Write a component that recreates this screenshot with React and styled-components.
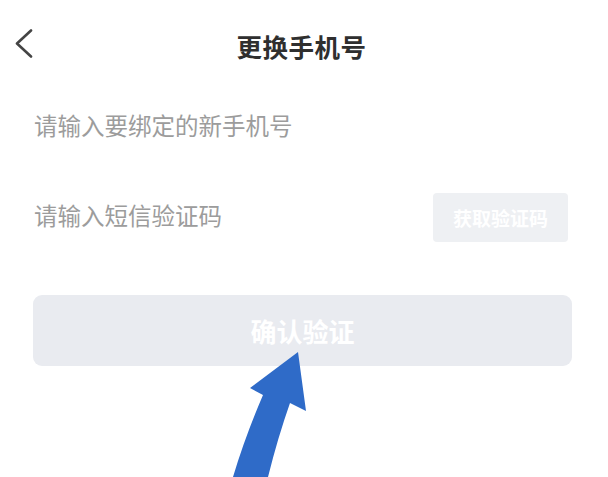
import React from "react";
import styled, { createGlobalStyle } from "styled-components";

const GlobalStyles = createGlobalStyle`
  html, body {
    margin: 0;
    padding: 0;
    background: #ffffff;
  }
  body {
    font-family: "Noto Sans CJK SC", "Noto Sans", sans-serif;
  }
  * {
    box-sizing: border-box;
  }
`;

const fields = [
  { id: "phone", placeholder: "请输入要绑定的新手机号" },
  { id: "code", placeholder: "请输入短信验证码", withCode: true },
];

const App = () => {
  return (
    <Page>
      <GlobalStyles />
      <Header>
        <BackButton aria-label="返回">
          <svg width="18" height="30" viewBox="0 0 18 30" fill="none">
            <path
              d="M16 1.5 L2 14.5 L16 27.5"
              stroke="#444"
              strokeWidth="2.6"
              strokeLinecap="round"
              strokeLinejoin="round"
            />
          </svg>
        </BackButton>
        <Title>更换手机号</Title>
        <span />
      </Header>

      <Form>
        {fields.map((f) => (
          <FieldRow key={f.id}>
            <Input placeholder={f.placeholder} />
            {f.withCode && <CodeButton>获取验证码</CodeButton>}
          </FieldRow>
        ))}
        <SubmitButton>确认验证</SubmitButton>
      </Form>

      {/* pointer drawn over the submit button */}
      <Pointer width="90" height="130" viewBox="0 0 90 130">
        <path
          d="M75 5 L83 64 L67 56 Q55 90 45 130 L10 130 Q22 90 40 48 L27 41 Z"
          fill="#2f6bc8"
        />
      </Pointer>
    </Page>
  );
};

const Page = styled.div`
  position: relative;
  width: 608px;
  height: 477px;
  overflow: hidden;
  background: #fff;
`;

const Header = styled.div`
  height: 90px;
  display: grid;
  grid-template-columns: 1fr auto 1fr;
  align-items: center;
  padding: 0 20px 0 15px;
`;

const BackButton = styled.button`
  justify-self: start;
  display: flex;
  align-items: center;
  padding: 0;
  margin-top: -3px;
  border: none;
  background: none;
  cursor: pointer;
`;

const Title = styled.h1`
  margin: 0;
  font-size: 25.5px;
  font-weight: 700;
  letter-spacing: 0.5px;
  color: #2f2f2f;
`;

const Form = styled.div`
  display: flex;
  flex-direction: column;
  padding: 10px 36px 0 33px;
`;

const FieldRow = styled.div`
  height: 50px;
  display: flex;
  align-items: center;
  justify-content: space-between;
  padding-right: 4px;

  & + & {
    margin-top: 40px;
  }
`;

const Input = styled.input`
  flex: 1;
  min-width: 0;
  border: none;
  outline: none;
  padding: 0 0 0 1px;
  font-family: inherit;
  font-size: 23.5px;
  color: #333;
  background: transparent;

  &::placeholder {
    color: #9c9c9c;
  }
`;

const CodeButton = styled.button`
  width: 135px;
  height: 49px;
  margin-top: 4px;
  border: none;
  border-radius: 4px;
  background: #eef0f3;
  color: #ffffff;
  font-family: inherit;
  font-size: 19px;
  font-weight: 700;
  cursor: pointer;
`;

const SubmitButton = styled.button`
  margin-top: 55px;
  height: 71px;
  border: none;
  border-radius: 9px;
  background: #e9ebf0;
  color: #ffffff;
  font-family: inherit;
  font-size: 26px;
  font-weight: 700;
  cursor: pointer;
`;

const Pointer = styled.svg`
  position: absolute;
  left: 223px;
  top: 347px;
`;

export default App;
